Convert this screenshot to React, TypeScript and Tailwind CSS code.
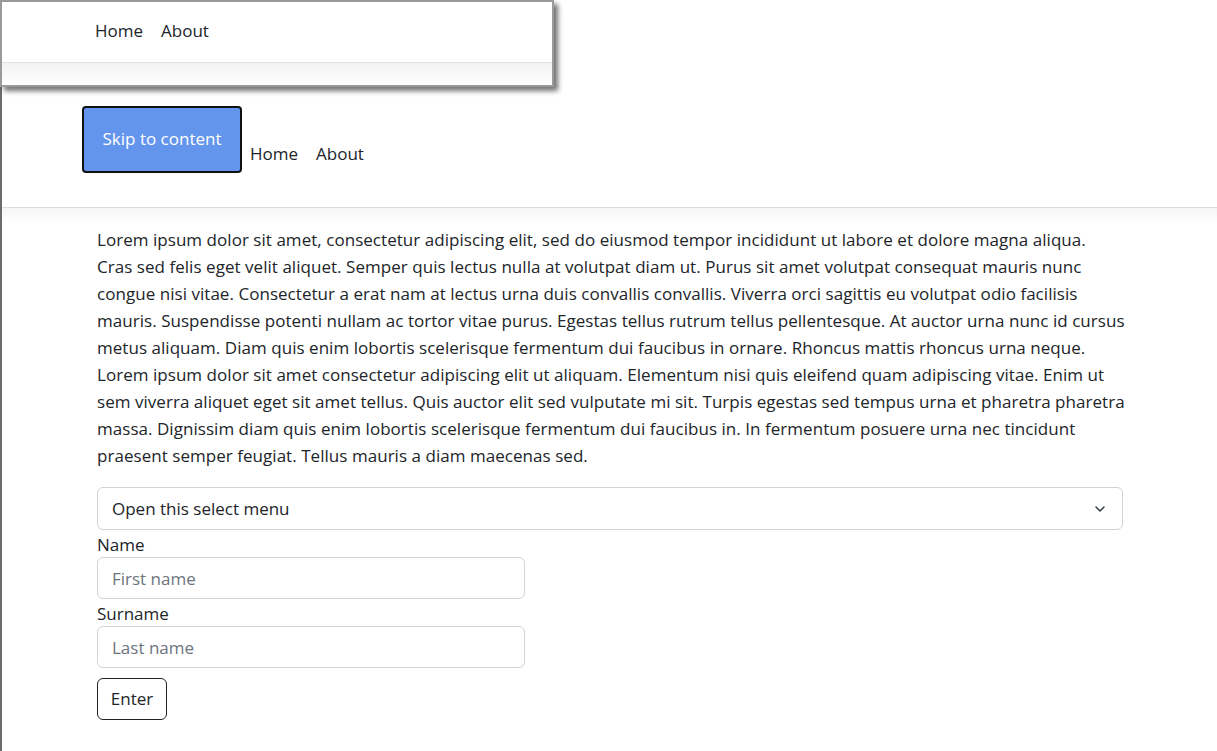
import { ChevronDown } from "lucide-react";

const lines = [
  "Lorem ipsum dolor sit amet, consectetur adipiscing elit, sed do eiusmod tempor incididunt ut labore et dolore magna aliqua.",
  "Cras sed felis eget velit aliquet. Semper quis lectus nulla at volutpat diam ut. Purus sit amet volutpat consequat mauris nunc",
  "congue nisi vitae. Consectetur a erat nam at lectus urna duis convallis convallis. Viverra orci sagittis eu volutpat odio facilisis",
  "mauris. Suspendisse potenti nullam ac tortor vitae purus. Egestas tellus rutrum tellus pellentesque. At auctor urna nunc id cursus",
  "metus aliquam. Diam quis enim lobortis scelerisque fermentum dui faucibus in ornare. Rhoncus mattis rhoncus urna neque.",
  "Lorem ipsum dolor sit amet consectetur adipiscing elit ut aliquam. Elementum nisi quis eleifend quam adipiscing vitae. Enim ut",
  "sem viverra aliquet eget sit amet tellus. Quis auctor elit sed vulputate mi sit. Turpis egestas sed tempus urna et pharetra pharetra",
  "massa. Dignissim diam quis enim lobortis scelerisque fermentum dui faucibus in. In fermentum posuere urna nec tincidunt",
  "praesent semper feugiat. Tellus mauris a diam maecenas sed.",
];

function NavLinks() {
  return (
    <nav className="flex gap-[18px] text-[17px] text-[#212529]">
      <a href="#">Home</a>
      <a href="#">About</a>
    </nav>
  );
}

export default function App() {
  return (
    <div
      className="relative min-h-[751px] bg-white text-[#212529]"
      style={{ fontFamily: '"Open Sans", "Noto Sans", sans-serif' }}
    >
      {/* floating copy of the header */}
      <div className="absolute left-0 top-0 z-10 w-[554px] h-[87px] border-2 border-[#9a9a9a] bg-white shadow-[4px_4px_5px_rgba(0,0,0,0.55)]">
        <div className="h-[61px] flex items-center pl-[93px] pb-[2px] border-b border-[#e2e2ea]">
          <NavLinks />
        </div>
        <div className="h-[22px] bg-gradient-to-b from-[#f3f3f3] to-white" />
      </div>

      <div className="pt-[98px] border-l-2 border-[#6b6b6b] min-h-[751px]">
        <header className="h-[110px] flex items-center pl-[80px] border-b border-[#dcdcdc]">
          <a
            href="#"
            className="flex items-center justify-center w-[160px] h-[67px] -mt-[27px] rounded-[4px] border-2 border-[#111] bg-[#6495ed] text-white text-[17px]"
          >
            Skip to content
          </a>
          <div className="ml-[8px] mt-[2px]">
            <NavLinks />
          </div>
        </header>
        <div className="h-[16px] bg-gradient-to-b from-[#f5f5f5] to-white" />

        <main className="pl-[95px] w-[1123px]">
          <p className="text-[17px] leading-[27px] tracking-[0.04px] whitespace-nowrap mt-[2px]">
            {lines.map((l, i) => (
              <span key={i} className="block">
                {l}
              </span>
            ))}
          </p>

          <div className="mt-[18px] h-[43px] w-[1026px] rounded-[6px] border border-[#ced4da] flex items-center justify-between pl-[14px] pr-[14px] text-[17px]">
            <span>Open this select menu</span>
            <ChevronDown size={16} strokeWidth={2.2} className="text-[#343a40]" />
          </div>

          <label className="block mt-[3px] text-[17px] leading-[24px]">Name</label>
          <input
            placeholder="First name"
            className="block w-[428px] h-[42px] rounded-[6px] border border-[#ced4da] px-[14px] text-[17px] placeholder:text-[#6c757d] outline-none"
          />
          <label className="block mt-[3px] text-[17px] leading-[24px]">Surname</label>
          <input
            placeholder="Last name"
            className="block w-[428px] h-[42px] rounded-[6px] border border-[#ced4da] px-[14px] text-[17px] placeholder:text-[#6c757d] outline-none"
          />
          <button className="mt-[10px] h-[42px] w-[70px] rounded-[6px] border border-[#212529] text-[17px]">
            Enter
          </button>
        </main>
      </div>
    </div>
  );
}
